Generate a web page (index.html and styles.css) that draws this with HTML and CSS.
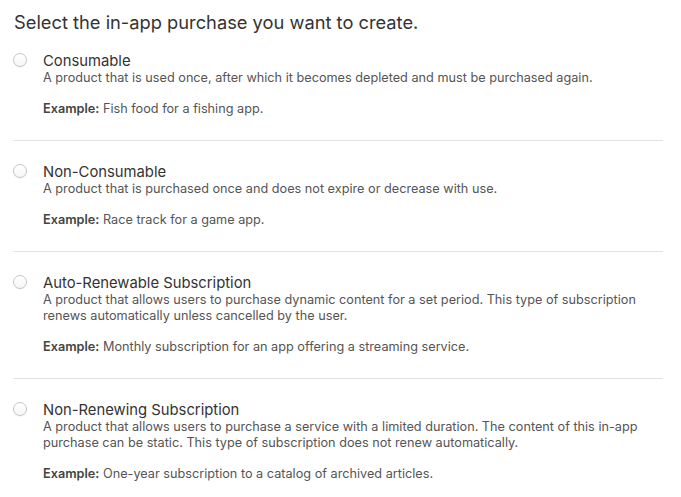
FILE: index.html
```html
<!DOCTYPE html>
<html lang="en">
<head>
<meta charset="utf-8">
<title>In-App Purchase Type</title>
<link rel="stylesheet" href="styles.css">
</head>
<body>
<div class="page">
  <h1 class="heading">Select the in-app purchase you want to create.</h1>
  <ul class="options">
    <li class="option">
      <span class="radio"></span>
      <div class="body">
        <div class="title">Consumable</div>
        <p class="desc">A product that is used once, after which it becomes depleted and must be purchased again.</p>
        <p class="example"><b>Example:</b> Fish food for a fishing app.</p>
      </div>
    </li>
    <li class="option">
      <span class="radio"></span>
      <div class="body">
        <div class="title">Non-Consumable</div>
        <p class="desc">A product that is purchased once and does not expire or decrease with use.</p>
        <p class="example"><b>Example:</b> Race track for a game app.</p>
      </div>
    </li>
    <li class="option">
      <span class="radio"></span>
      <div class="body">
        <div class="title">Auto-Renewable Subscription</div>
        <p class="desc">A product that allows users to purchase dynamic content for a set period. This type of subscription renews automatically unless cancelled by the user.</p>
        <p class="example"><b>Example:</b> Monthly subscription for an app offering a streaming service.</p>
      </div>
    </li>
    <li class="option">
      <span class="radio"></span>
      <div class="body">
        <div class="title">Non-Renewing Subscription</div>
        <p class="desc">A product that allows users to purchase a service with a limited duration. The content of this in-app purchase can be static. This type of subscription does not renew automatically.</p>
        <p class="example"><b>Example:</b> One-year subscription to a catalog of archived articles.</p>
      </div>
    </li>
  </ul>
</div>
</body>
</html>
```

FILE: styles.css
```css
* { box-sizing: border-box; }
html, body { margin: 0; padding: 0; background: #fff; }
body {
  font-family: Inter, "Liberation Sans", Arial, sans-serif;
  color: #333;
}
.page {
  padding: 10px 18px 0 13px;
}
.heading {
  margin: 0 0 0 1px;
  font-size: 18.3px;
  line-height: 24px;
  font-weight: normal;
  color: #333;
}
.options {
  list-style: none;
  margin: 0;
  padding: 0;
}
.option {
  display: flex;
  gap: 16px;
  padding: 22px 0 23px;
  border-bottom: 1px solid #e2e2e2;
}
.option:first-child { padding-top: 18px; }
.option:last-child { border-bottom: none; }
.radio {
  flex: none;
  width: 14px;
  height: 14px;
  margin-top: 1px;
  border-radius: 50%;
  border: 1px solid #c6c6c6;
  background: linear-gradient(#fff, #f6f6f6);
  box-shadow: 0 0.5px 1px rgba(0,0,0,0.08);
}
.body { flex: 1; min-width: 0; }
.title {
  font-size: 14.8px;
  line-height: 18px;
  color: #333;
}
.desc, .example {
  margin: 0;
  font-size: 12.7px;
  line-height: 16px;
  color: #555;
}
.example { margin-top: 15px; }
.example b { font-weight: 600; color: #444; }
```
